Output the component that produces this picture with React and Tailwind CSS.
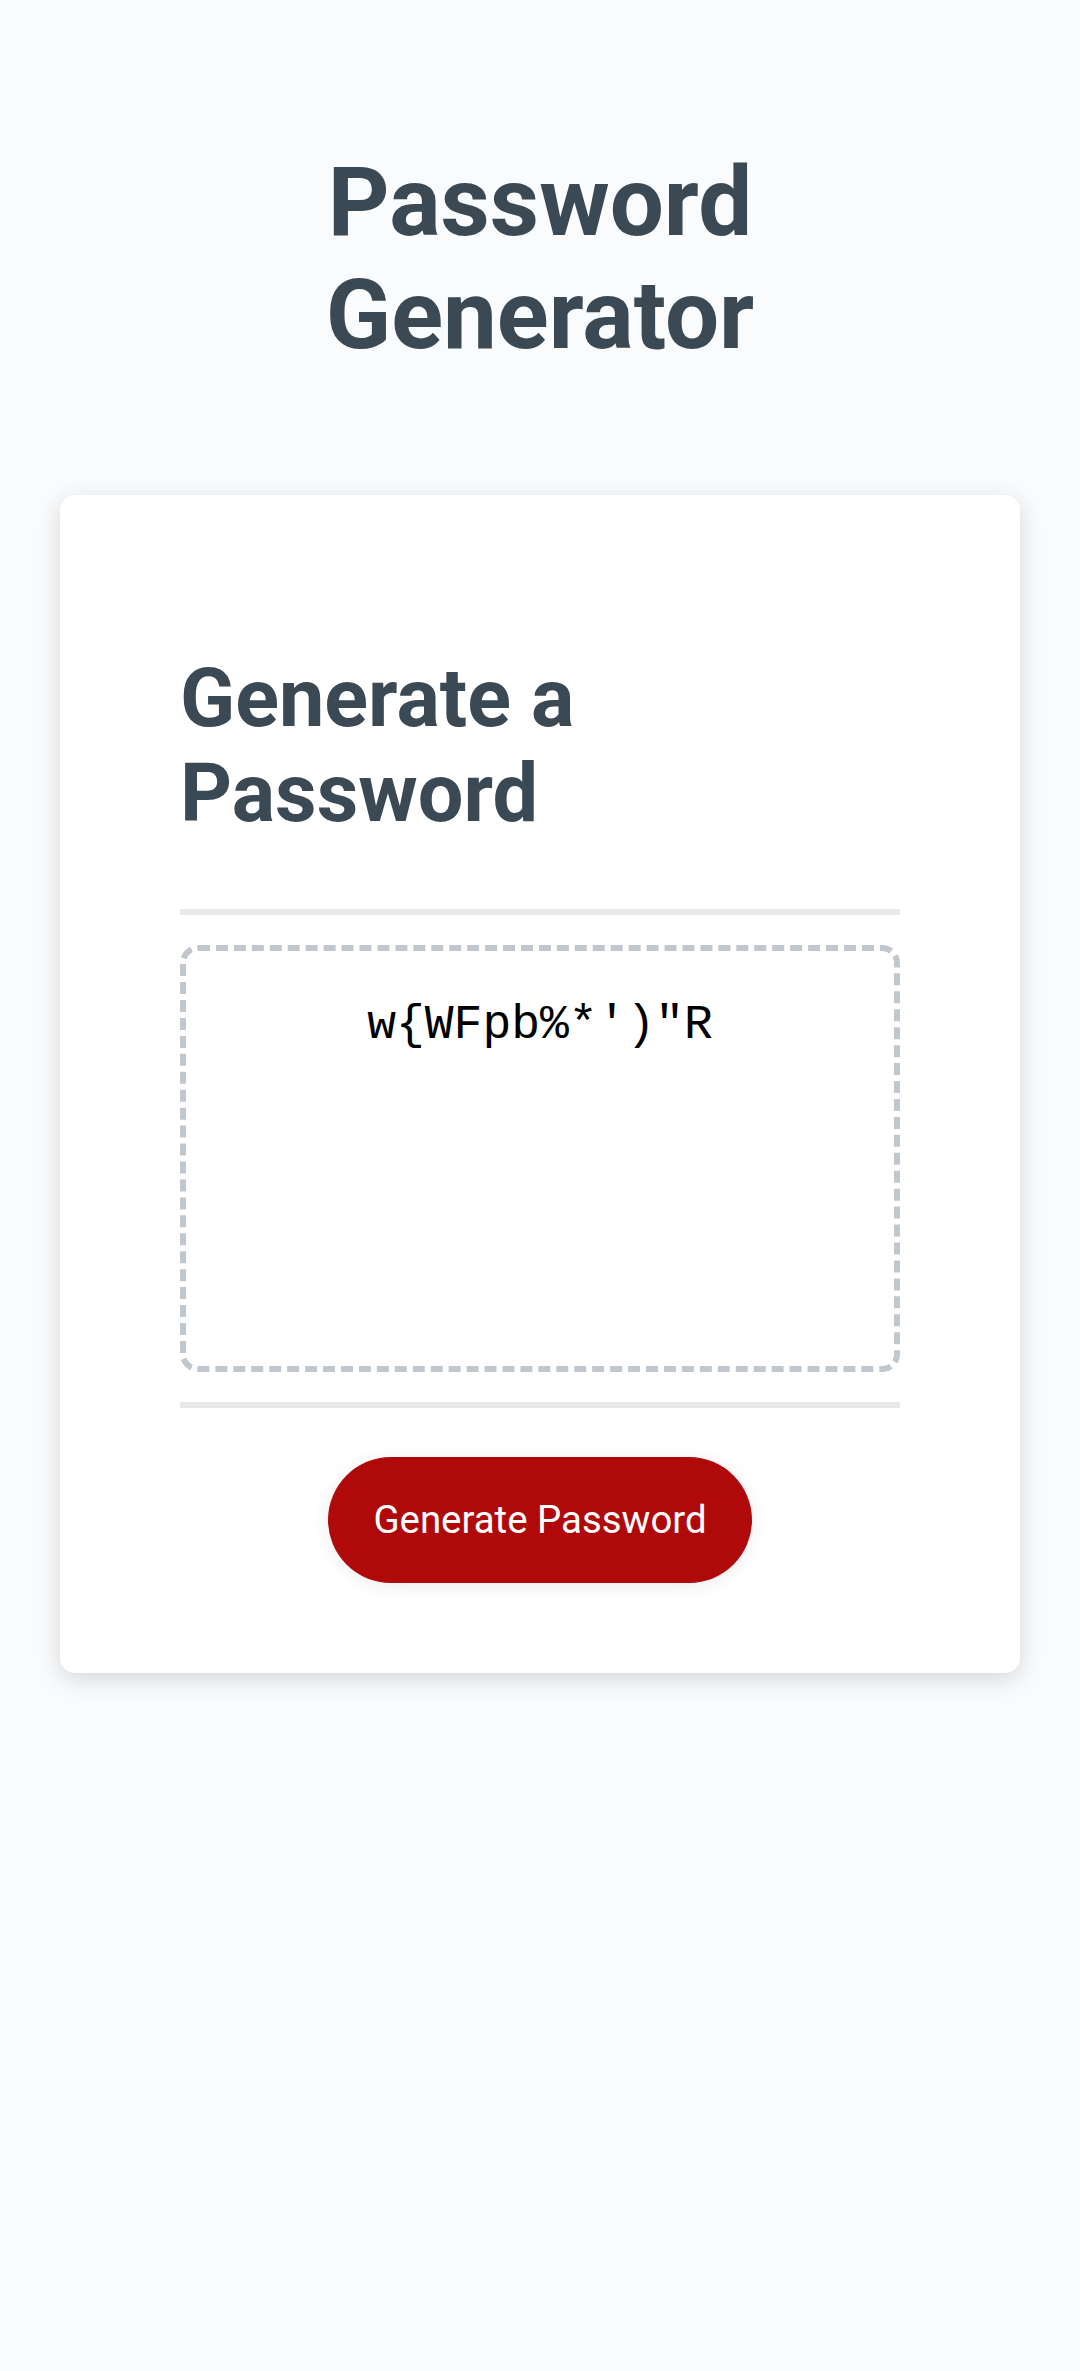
import React, { useState } from 'react';

const chars =
  'abcdefghijklmnopqrstuvwxyzABCDEFGHIJKLMNOPQRSTUVWXYZ0123456789!"#$%&\'()*+,-./:;<=>?@[]^_`{|}~';

const makePassword = (len) => {
  let out = '';
  for (let i = 0; i < len; i++) {
    out += chars[Math.floor(Math.random() * chars.length)];
  }
  return out;
};

const App = () => {
  const [password, setPassword] = useState('w{WFpb%*\')"R');

  return (
    <div className="min-h-[2371px] bg-[#f9fbfd] px-[60px] pt-[82px] font-['Roboto',sans-serif]">
      {/* Encabezado */}
      <header className="px-[60px] pb-[60px] text-center text-[#3b4954]">
        <h1 className="my-[64px] text-[96px] font-bold leading-[1.172]">
          Password Generator
        </h1>
      </header>

      {/* Tarjeta */}
      <div className="mx-auto rounded-[15px] bg-white px-[120px] py-[90px] text-[#3b4954] shadow-[0_6px_24px_rgba(0,0,0,0.15)]">
        <div>
          <h2 className="my-[67px] text-[81px] font-bold leading-[1.172]">
            Generate a Password
          </h2>
          <div className="h-[6px] w-full bg-[#e7e9eb]" />
        </div>

        <div>
          <textarea
            readOnly
            value={password}
            placeholder="Your Secure Password"
            aria-label="Generated Password"
            className="my-[30px] block h-[427px] w-full resize-none overflow-hidden rounded-[18px] border-[6px] border-dashed border-[#c0c7cf] px-[45px] pt-[47px] pb-[255px] text-center font-['Liberation_Mono',monospace] text-[48px] leading-[55px] text-black outline-none"
          />
        </div>

        <div className="text-center">
          <div className="h-[6px] w-full bg-[#e7e9eb]" />
          <button
            onClick={() => setPassword(makePassword(12))}
            className="mt-[49px] inline-block cursor-pointer rounded-full bg-[#af0909] px-[45px] py-[30px] text-[38.4px] leading-[66px] text-white shadow-[0_3px_18px_rgba(0,0,0,0.08)]"
          >
            Generate Password
          </button>
        </div>
      </div>
    </div>
  );
};

export default App;
